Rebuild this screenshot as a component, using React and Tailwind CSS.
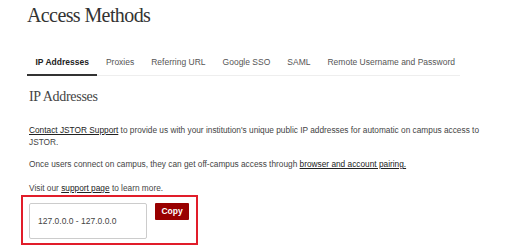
export default function App() {
  const sans = { fontFamily: '"Liberation Sans", Arial, sans-serif' };
  const tabs = ["IP Addresses", "Proxies", "Referring URL", "Google SSO", "SAML", "Remote Username and Password"];
  return (
    <div className="w-[520px] h-[245px] bg-white overflow-hidden text-[#333]" style={sans}>
      <div className="pl-[27px] pt-[3px]">
        <h1 className="text-[20px] leading-[24px] text-[#333] tracking-[-0.6px]" style={{ fontFamily: '"Liberation Serif", serif' }}>Access Methods</h1>
        <div className="mt-[29px] w-[433px] border-b border-[#eee] flex text-[8.5px] leading-[10px] whitespace-nowrap">
          {tabs.map((t, i) => (
            <div key={t} className={`shrink-0 px-[8.5px] pb-[7px] pt-[1px] ${i === 0 ? "font-bold text-[#222] border-b-2 border-[#333] -mb-px" : "text-[#555]"}`}>{t}</div>
          ))}
        </div>
        <h2 className="mt-[12px] pl-[2px] text-[14px] leading-[18px] text-[#444] tracking-[-0.3px]" style={{ fontFamily: '"Liberation Serif", serif' }}>IP Addresses</h2>
        <div className="mt-[18px] pl-[2px] text-[8.3px] leading-[12px] text-[#444] pr-[20px]">
          <p><a className="underline text-[#222]">Contact JSTOR Support</a> to provide us with your institution's unique public IP addresses for automatic on campus access to JSTOR.</p>
          <p className="mt-[10px]">Once users connect on campus, they can get off-campus access through <a className="underline text-[#222]">browser and account pairing.</a></p>
          <p className="mt-[12px]">Visit our <a className="underline text-[#222]">support page</a> to learn more.</p>
        </div>
      </div>
      <div className="ml-[21px] mt-[1px] w-[177px] h-[50px] border-[2px] border-[#e11d2a] flex items-start pl-[6px] pt-[6px] gap-[8px]">
        <div className="w-[118px] h-[36px] border border-[#ccc] rounded-[2px] flex items-center pl-[8px] text-[8.5px] text-[#444]">127.0.0.0 - 127.0.0.0</div>
        <button className="w-[34px] h-[17px] bg-[#990000] text-white text-[8.5px] font-bold rounded-[1px]">Copy</button>
      </div>
    </div>
  );
}
